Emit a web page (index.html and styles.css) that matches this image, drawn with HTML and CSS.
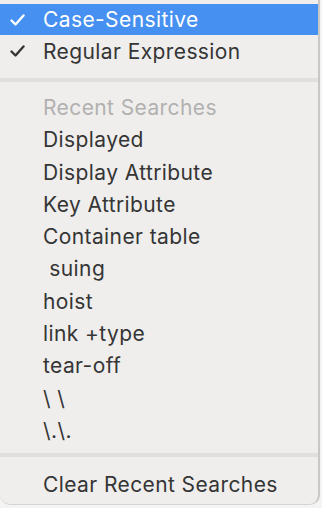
FILE: index.html
```html
<!DOCTYPE html>
<html>
<head>
<meta charset="utf-8">
<link rel="stylesheet" href="styles.css">
</head>
<body>
<div class="menu">
  <div class="group top">
    <div class="item selected"><span class="check"><svg width="15" height="12" viewBox="0 0 15 12"><polyline points="1.5,6.5 5.5,10.5 13.5,1.5" fill="none" stroke="currentColor" stroke-width="2.4" stroke-linecap="round" stroke-linejoin="round"/></svg></span><span class="label">Case-Sensitive</span></div>
    <div class="item"><span class="check"><svg width="15" height="12" viewBox="0 0 15 12"><polyline points="1.5,6.5 5.5,10.5 13.5,1.5" fill="none" stroke="currentColor" stroke-width="2.4" stroke-linecap="round" stroke-linejoin="round"/></svg></span><span class="label">Regular Expression</span></div>
  </div>
  <div class="sep"></div>
  <div class="group mid">
    <div class="item disabled"><span class="check"></span><span class="label">Recent Searches</span></div>
    <div class="item"><span class="check"></span><span class="label">Displayed</span></div>
    <div class="item"><span class="check"></span><span class="label">Display Attribute</span></div>
    <div class="item"><span class="check"></span><span class="label">Key Attribute</span></div>
    <div class="item"><span class="check"></span><span class="label">Container table</span></div>
    <div class="item"><span class="check"></span><span class="label">&nbsp;suing</span></div>
    <div class="item"><span class="check"></span><span class="label">hoist</span></div>
    <div class="item"><span class="check"></span><span class="label">link +type</span></div>
    <div class="item"><span class="check"></span><span class="label">tear-off</span></div>
    <div class="item"><span class="check"></span><span class="label">\ \</span></div>
    <div class="item"><span class="check"></span><span class="label">\.\.</span></div>
  </div>
  <div class="sep"></div>
  <div class="group bottom">
    <div class="item"><span class="check"></span><span class="label">Clear Recent Searches</span></div>
  </div>
</div>
</body>
</html>
```

FILE: styles.css
```css
html, body {
  margin: 0;
  padding: 0;
  background: #f4f4f4;
}
body {
  width: 322px;
  height: 508px;
  overflow: hidden;
}
.menu {
  width: 320px;
  height: 505px;
  background: #efeeed;
  border-right: 2px solid #c9c8c7;
  border-bottom: 1px solid #d5d4d3;
  border-radius: 0 0 10px 10px;
  box-sizing: border-box;
  padding-top: 4px;
  font-family: Inter, "Open Sans", sans-serif;
  font-size: 21px;
  letter-spacing: 0.4px;
  color: #353535;
  overflow: hidden;
}
.group.top { padding-bottom: 10.7px; }
.group.mid { padding-top: 9.3px; padding-bottom: 6.4px; }
.group.bottom { padding-top: 11.3px; }
.item {
  height: 32.3px;
  display: flex;
  align-items: center;
  box-sizing: border-box;
  line-height: 1;
}
.item.selected {
  background: #4590f0;
  color: #ffffff;
  height: 31px;
}
.item.disabled { color: #b2b1b0; }
.check {
  width: 43px;
  flex: none;
  display: flex;
  justify-content: flex-start;
  padding-left: 10px;
  box-sizing: border-box;
}
.check svg { display: block; }
.label { white-space: pre; }
.sep {
  height: 4px;
  background: #e0dfde;
}
```
